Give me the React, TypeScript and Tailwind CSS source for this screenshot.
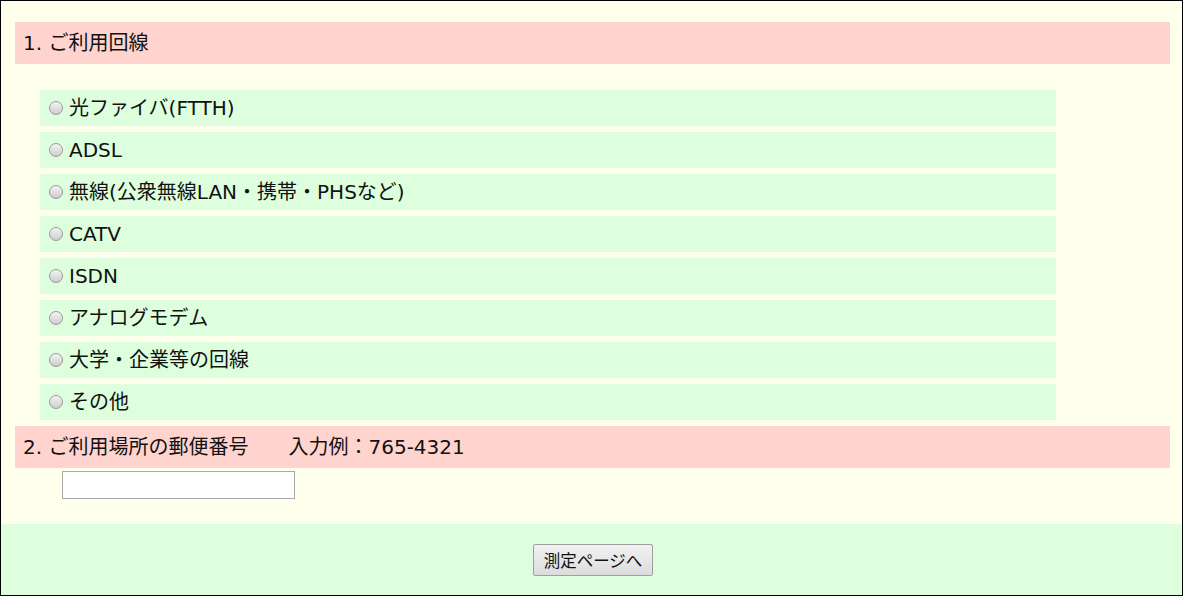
import React from 'react';

const lines = [
	'光ファイバ(FTTH)',
	'ADSL',
	'無線(公衆無線LAN・携帯・PHSなど)',
	'CATV',
	'ISDN',
	'アナログモデム',
	'大学・企業等の回線',
	'その他',
];

const Radio = () => (
	<span className="inline-block w-[14px] h-[14px] rounded-full border border-[#999] bg-gradient-to-b from-[#f4f4f4] to-[#cccccc] shrink-0" />
);

const App = () => {
	return (
		<div
			className="w-[1183px] h-[596px] border border-black bg-[#ffffee] flex flex-col text-[#111] overflow-hidden"
			style={{ fontFamily: '"DejaVu Sans", "Noto Sans CJK JP", sans-serif' }}
		>
			<div className="flex-1 pt-[21px] pl-[14px] pr-[12px]">
				{/* 1 */}
				<div className="h-[42px] bg-[#ffd3ce] flex items-center pl-[8px] text-[20px]">1. ご利用回線</div>

				<div className="mt-[26px] ml-[25px] w-[1016px] flex flex-col gap-[6px]">
					{lines.map((line) => (
						<label key={line} className="h-[36px] bg-[#ddffdd] flex items-center pl-[9px] gap-[6px] text-[20px]">
							<Radio />
							<span>{line}</span>
						</label>
					))}
				</div>

				{/* 2 */}
				<div className="mt-[6px] h-[42px] bg-[#ffd3ce] flex items-center pl-[8px] text-[20px]">
					<span>2. ご利用場所の郵便番号</span>
					<span className="ml-[40px]">入力例：765-4321</span>
				</div>
				<input
					type="text"
					className="mt-[3px] ml-[47px] block w-[233px] h-[28px] bg-white border border-[#a9a9a9] outline-none"
				/>
			</div>

			<div className="h-[71px] bg-[#ddffdd] flex justify-center pt-[20px] pl-[3px]">
				<button
					className="w-[120px] h-[32px] border border-[#a0a0a0] rounded-[2px] bg-gradient-to-b from-[#f2f2f2] to-[#dcdcdc] text-[16.5px] text-[#111]"
					style={{ fontFamily: '"Noto Sans CJK JP", sans-serif' }}
				>
					測定ページへ
				</button>
			</div>
		</div>
	);
};

export default App;
